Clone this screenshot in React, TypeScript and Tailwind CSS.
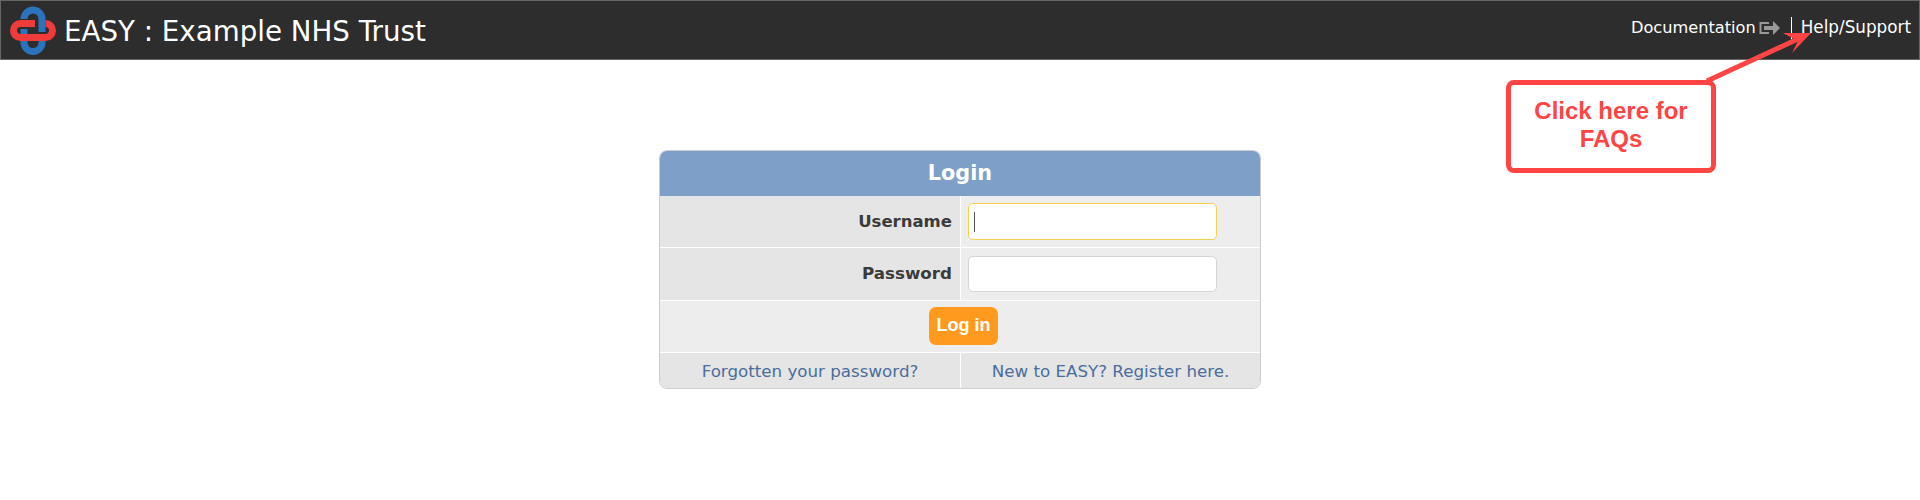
export default function App() {
  return (
    <div className="relative min-h-[500px] bg-white font-['DejaVu_Sans',sans-serif]">
      {/* Top bar */}
      <header className="h-[60px] flex items-center justify-between bg-[#2d2d2d] border border-[#666] pl-[7px] pr-[8px]">
        <div className="flex items-center gap-[6px]">
          <Logo />
          <span className="pt-[4px] text-[27.7px] leading-none text-white">EASY : Example NHS Trust</span>
        </div>
        <div className="flex items-center pb-[4px] text-white">
          <a className="flex items-center gap-[3px] text-[16.2px]">
            Documentation
            <svg width="22" height="14" viewBox="0 0 22 14" fill="none" stroke="#999" strokeWidth="2">
              <path d="M10 2H1.500V12H10" />
              <path d="M5 7H15" strokeWidth="4" />
              <path d="M14 0L21 7L14 14Z" fill="#999" strokeWidth="0" />
            </svg>
          </a>
          <span className="w-px h-[22px] bg-white ml-[10px] mr-[9px]" />
          <a className="text-[16.8px]">Help/Support</a>
        </div>
      </header>

      {/* Login form */}
      <main className="flex justify-center pt-[90px]">
        <div className="w-[602px] rounded-[8px] border border-[#ccc] overflow-hidden">
          <div className="h-[45px] flex items-center justify-center bg-[#7d9fc8] text-[20.8px] font-bold text-white">
            Login
          </div>
          <div className="grid grid-cols-[301px_1fr] border-b border-white">
            <label className="h-[51px] flex items-center justify-end pt-[2px] pr-[8px] bg-[#e5e5e5] border-r border-white text-[16.5px] font-bold text-[#3b3b3b]">
              Username
            </label>
            <div className="relative h-[51px] flex items-center pl-[7px] bg-[#ededed]">
              <input className="w-[249px] h-[37px] rounded-[5px] border border-[#f5d04e] bg-white outline-none" />
              <span className="absolute left-[13px] top-[16px] w-px h-[20px] bg-[#555]" />
            </div>
          </div>
          <div className="grid grid-cols-[301px_1fr] border-b border-white">
            <label className="h-[52px] flex items-center justify-end pr-[8px] bg-[#e5e5e5] border-r border-white text-[16.7px] font-bold text-[#3b3b3b]">
              Password
            </label>
            <div className="h-[52px] flex items-center pl-[7px] bg-[#ededed]">
              <input type="password" className="w-[249px] h-[36px] rounded-[5px] border border-[#d5d5d5] bg-white outline-none" />
            </div>
          </div>
          <div className="h-[52px] flex items-center justify-center pl-[7px] pb-[2px] bg-[#ededed] border-b border-white">
            <button className="w-[69px] h-[38px] rounded-[7px] bg-[#ff9a1e] text-[18px] font-bold text-white font-['Liberation_Sans',sans-serif]">
              Log in
            </button>
          </div>
          <div className="grid grid-cols-[301px_1fr] h-[35px] bg-[#e5e5e5] text-[16.7px] text-[#4a6d9e]">
            <a className="flex items-center justify-center pt-[2px] border-r border-white">Forgotten your password?</a>
            <a className="flex items-center justify-center pt-[2px]">New to EASY? Register here.</a>
          </div>
        </div>
      </main>

      {/* Annotation laid over the page */}
      <div className="absolute left-[1506px] top-[80px] w-[210px] h-[93px] flex items-center justify-center pb-[3px] rounded-[8px] border-[5px] border-[#ff4444] bg-white text-center text-[24px] leading-[28px] font-bold text-[#ff4444] font-['Liberation_Sans',sans-serif]">
        Click here for
        <br />
        FAQs
      </div>
      <svg className="absolute left-[1700px] top-[25px]" width="120" height="65" viewBox="0 0 120 65" fill="none">
        <path d="M7 56L100 13" stroke="#ff4444" strokeWidth="5" />
        <path d="M111 8L83 8L98 16L92 28Z" fill="#ff4444" />
      </svg>
    </div>
  )
}

function Logo() {
  return (
    <svg width="50" height="50" viewBox="0 0 50 50" fill="none">
      <path d="M16 24V37.500A9 9 0 0 0 34 37.500V36" stroke="#2b74bd" strokeWidth="7" />
      <path d="M27 18.500H12.500A7 7 0 0 0 12.500 32.500H37.500A7 7 0 0 0 37.500 18.500" stroke="#ee3b3b" strokeWidth="7" />
      <path d="M16 14A9 9 0 0 1 34 14V27" stroke="#2b74bd" strokeWidth="7" />
    </svg>
  )
}
